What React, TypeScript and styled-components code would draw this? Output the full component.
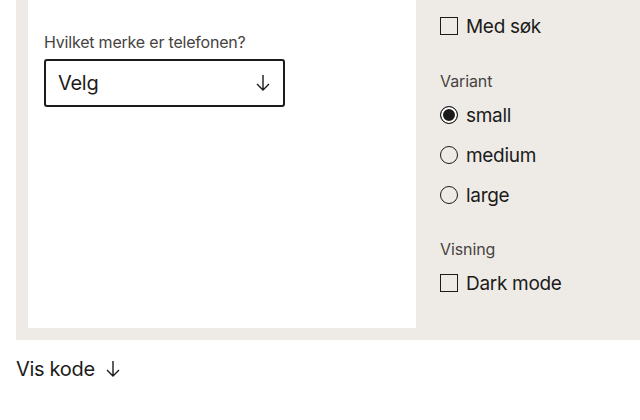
import React from "react";
import styled, { createGlobalStyle } from "styled-components";

const GlobalStyle = createGlobalStyle`
  body {
    margin: 0;
    background: #ffffff;
    font-family: Inter, "Noto Sans", sans-serif;
    color: #1c1b1a;
  }
`;

const Frame = styled.div`
  display: grid;
  grid-template-columns: 388px 1fr;
  margin: -12px 0 0 16px;
  padding: 12px 0 12px 12px;
  background: #eeebe7;
`;

const Preview = styled.div`
  background: #ffffff;
  height: 328px;
  padding: 33px 16px 0;
  box-sizing: border-box;
`;

const Label = styled.div`
  font-size: 16px;
  line-height: 19px;
  color: #46433f;
  margin-bottom: 7px;
  letter-spacing: -0.2px;
`;

const Select = styled.button`
  display: flex;
  align-items: center;
  justify-content: space-between;
  width: 241px;
  height: 48px;
  box-sizing: border-box;
  padding: 0 12px;
  border: 2px solid #1c1b1a;
  border-radius: 3px;
  background: #fff;
  font: inherit;
  font-size: 20px;
  color: #1c1b1a;
  letter-spacing: -0.3px;
`;

const Controls = styled.div`
  display: flex;
  flex-direction: column;
  padding: 6px 0 0 24px;
`;

const Group = styled.div<{ $gap?: number }>`
  display: flex;
  flex-direction: column;
  margin-bottom: ${(p) => p.$gap ?? 0}px;
`;

const GroupTitle = styled.div`
  font-size: 16px;
  line-height: 19px;
  color: #46433f;
  margin-bottom: 4px;
  letter-spacing: -0.1px;
`;

const Option = styled.label`
  display: flex;
  align-items: center;
  gap: 8px;
  height: 40px;
  font-size: 19px;
  color: #1c1b1a;
  letter-spacing: -0.3px;
`;

const Box = styled.span`
  width: 18px;
  height: 18px;
  box-sizing: border-box;
  border: 1.5px solid #1c1b1a;
`;

const Radio = styled.span<{ $checked?: boolean }>`
  width: 18px;
  height: 18px;
  box-sizing: border-box;
  border-radius: 50%;
  border: 1.5px solid #1c1b1a;
  background: ${(p) => (p.$checked ? "#1c1b1a" : "transparent")};
  box-shadow: ${(p) => (p.$checked ? "inset 0 0 0 2px #fff" : "none")};
`;

const CodeToggle = styled.div`
  display: flex;
  align-items: center;
  gap: 10px;
  margin: 17px 0 0 16px;
  font-size: 20px;
  color: #1c1b1a;
  letter-spacing: -0.3px;
`;

const Arrow = () => (
  <svg width="16" height="18" viewBox="0 0 16 18" fill="none" stroke="#1c1b1a" strokeWidth="1.4">
    <path d="M8 1v15M2 10l6 6 6-6" />
  </svg>
);

export default function App() {
  return (
    <>
      <GlobalStyle />
      <Frame>
        <Preview>
          <Label>Hvilket merke er telefonen?</Label>
          <Select>
            <span>Velg</span>
            <Arrow />
          </Select>
        </Preview>
        <Controls>
          <Group $gap={26}>
            <Option><Box />Med søk</Option>
          </Group>
          <Group $gap={25}>
            <GroupTitle>Variant</GroupTitle>
            <Option><Radio $checked />small</Option>
            <Option><Radio />medium</Option>
            <Option><Radio />large</Option>
          </Group>
          <Group>
            <GroupTitle>Visning</GroupTitle>
            <Option><Box />Dark mode</Option>
          </Group>
        </Controls>
      </Frame>
      <CodeToggle>
        Vis kode <Arrow />
      </CodeToggle>
    </>
  );
}
